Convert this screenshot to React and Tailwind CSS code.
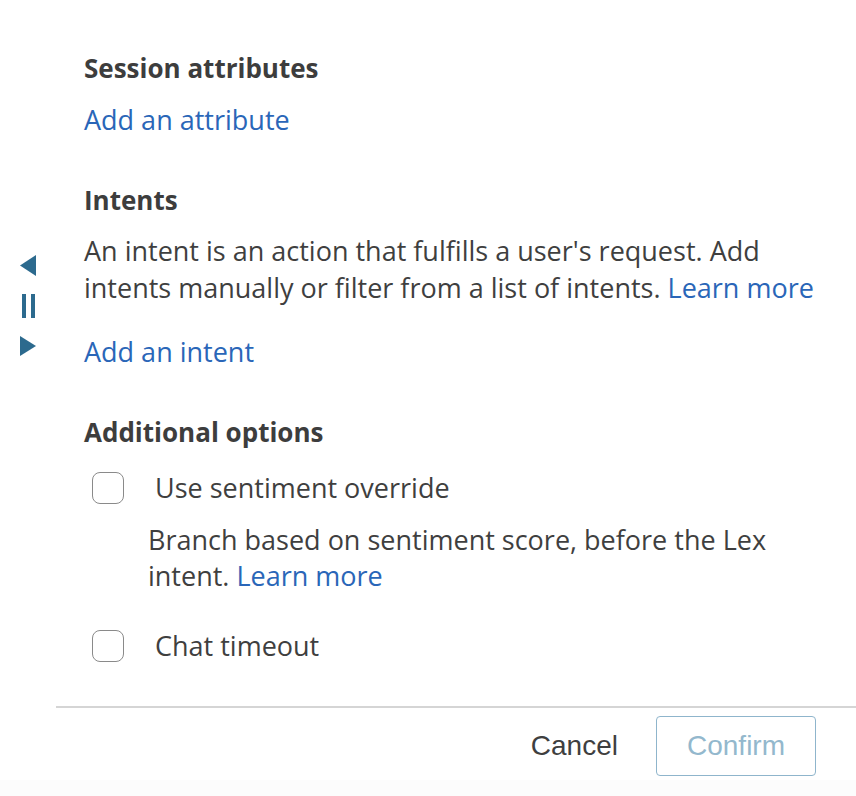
import React from "react";

function Checkbox() {
  return <div className="w-[32px] h-[32px] rounded-[8px] border-[1.5px] border-[#8a8a8a] bg-white shrink-0" />;
}

export default function App() {
  return (
    <div className="w-[856px] h-[796px] bg-white flex flex-col text-[#3f3f3f]" style={{ fontFamily: '"Open Sans", "Noto Sans", sans-serif' }}>
      <div className="flex">
        <div className="w-[56px] shrink-0 pt-[255px] flex flex-col items-start pl-[20px]">
          <svg width="16" height="21" viewBox="0 0 16 21"><path d="M16 0 L16 21 L0 10.5 Z" fill="#2c6a8e" /></svg>
          <div className="flex gap-[5px] mt-[18px] ml-[2px]">
            <div className="w-[4px] h-[24px] bg-[#2c6a8e]" />
            <div className="w-[4px] h-[24px] bg-[#2c6a8e]" />
          </div>
          <svg className="mt-[18px]" width="16" height="20" viewBox="0 0 16 20"><path d="M0 0 L16 10 L0 20 Z" fill="#2c6a8e" /></svg>
        </div>
        <div className="flex-1 flex flex-col">
          <div className="pl-[28px] pr-[20px] pt-[50px] text-[27px] leading-[36px]">
            <div className="font-bold text-[26px] text-[#3d3d3d]">Session attributes</div>
            <div className="mt-[16px] text-[#2a66b8]">Add an attribute</div>
            <div className="mt-[44px] font-bold text-[26px] text-[#3d3d3d]">Intents</div>
            <div className="mt-[14px] leading-[37px]">
              An intent is an action that fulfills a user's request. Add intents manually or filter from a list of intents. <span className="text-[#2a66b8]">Learn more</span>
            </div>
            <div className="mt-[28px] text-[#2a66b8]">Add an intent</div>
            <div className="mt-[44px] font-bold text-[26px] text-[#3d3d3d]">Additional options</div>
            <div className="mt-[20px] flex items-center pl-[8px]">
              <Checkbox />
              <span className="ml-[31px]">Use sentiment override</span>
            </div>
            <div className="mt-[16px] pl-[64px] pr-[40px]">
              Branch based on sentiment score, before the Lex intent. <span className="text-[#2a66b8]">Learn more</span>
            </div>
            <div className="mt-[34px] flex items-center pl-[8px]">
              <Checkbox />
              <span className="ml-[31px]">Chat timeout</span>
            </div>
          </div>
          <div className="mt-[42px] h-[2px] bg-[#d5d5d5]" />
          <div className="flex items-center justify-end pr-[40px] mt-[8px]" style={{ fontFamily: '"Liberation Sans", Arial, sans-serif' }}>
            <span className="text-[28px] text-[#3f3f3f] mr-[38px]">Cancel</span>
            <div className="w-[160px] h-[60px] rounded-[4px] border-[1.5px] border-[#8fb5cc] flex items-center justify-center text-[28px] text-[#93b8cd]">Confirm</div>
          </div>
        </div>
      </div>
      <div className="flex-1 mt-[4px] bg-[#fcfcfc]" />
    </div>
  );
}
